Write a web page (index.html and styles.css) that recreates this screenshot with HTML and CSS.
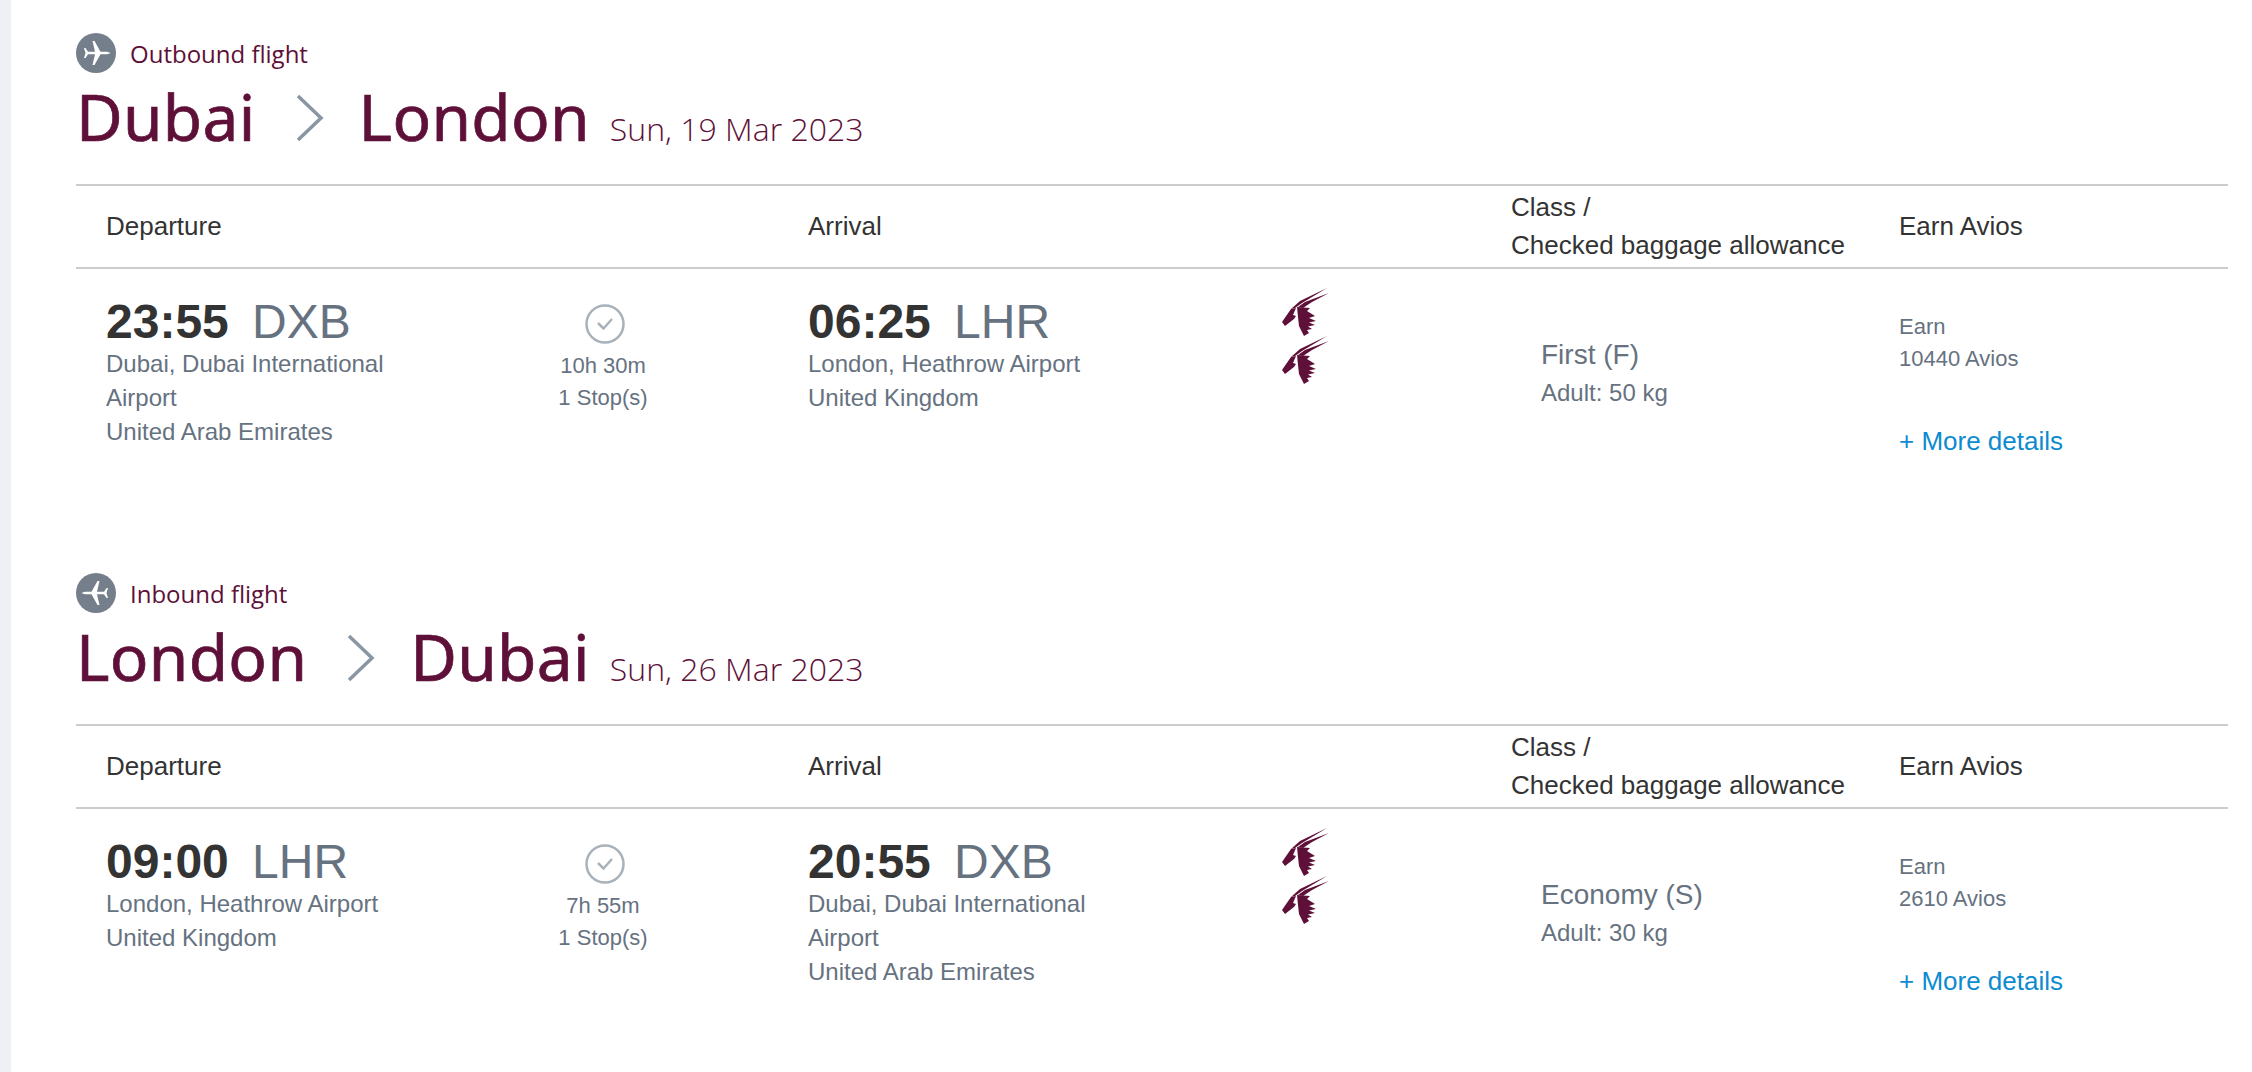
FILE: index.html
```html
<!DOCTYPE html>
<html lang="en">
<head>
    <meta charset="UTF-8">
    <title>Flight details</title>
    <link rel="stylesheet" href="styles.css">
</head>
<body>
    <svg class="defs" width="0" height="0">
        <symbol id="oryx" viewBox="0 0 48 48">
            <path d="M46 0 L19 13 L10 21 L14 20 L21 15 Z"/>
            <path d="M48 5 L24 14 L17 19 L22 20 L31 14 Z"/>
            <path d="M10 21 L1 34 L4 38 L13 31 L15 28 L12 27 L15 20 Z"/>
            <path d="M16 19 L29 20 L26 23 L34 28 L28 30 L35 33 L28 34.500 L34 37 L27 38.500 L31 41 L26 42 L28 45 L23 48 L18 38 L17 29 Z"/>
        </symbol>
        <symbol id="plane" viewBox="0 0 40 40">
            <path fill="#fff" d="M8 15 L9.500 15 L12 18.800 L19 18.800 L16.500 8 L18.500 8 L24.500 18.800 L31 18.800 Q34 19.500 34.500 20 Q34 20.500 31 21.200 L24.500 21.200 L18.500 32 L16.500 32 L19 21.200 L12 21.200 L9.500 25 L8 25 L9.500 20 Z"/>
        </symbol>
    </svg>

    <div class="page">
        <!-- Outbound -->
        <section class="bound">
            <div class="bound-label">
                <svg class="plane-badge"><use href="#plane"/></svg>
                Outbound flight
            </div>
            <h1 class="route">
                <span>Dubai</span>
                <svg class="route-arrow" viewBox="0 0 28 46"><path d="M2 1 L25 23 L2 45"/></svg>
                <span>London</span>
                <small>Sun, 19 Mar 2023</small>
            </h1>
            <div class="flight-head">
                <div class="col-seg">Departure</div>
                <div class="col-seg">Arrival</div>
                <div class="col-class">Class /<br>Checked baggage allowance</div>
                <div class="col-earn">Earn Avios</div>
            </div>
            <div class="flight-row">
                <div class="seg">
                    <div class="place">
                        <div class="time"><b>23:55</b> DXB</div>
                        <p>Dubai, Dubai International Airport</p>
                        <p>United Arab Emirates</p>
                    </div>
                    <div class="duration">
                        <svg class="clock" viewBox="0 0 40 40"><circle cx="20" cy="20" r="18.500"/><path d="M13 19 L18.500 24.500 L27 15"/></svg>
                        <div>10h 30m</div>
                        <div>1 Stop(s)</div>
                    </div>
                </div>
                <div class="seg">
                    <div class="place">
                        <div class="time"><b>06:25</b> LHR</div>
                        <p>London, Heathrow Airport</p>
                        <p>United Kingdom</p>
                    </div>
                    <div class="carrier">
                        <svg><use href="#oryx"/></svg>
                        <svg><use href="#oryx"/></svg>
                    </div>
                </div>
                <div class="cabin">
                    <div class="cabin-name">First (F)</div>
                    <div>Adult: 50 kg</div>
                </div>
                <div class="earn">
                    <div>Earn</div>
                    <div>10440 Avios</div>
                    <a href="#" class="more">+ More details</a>
                </div>
            </div>
        </section>

        <!-- Inbound -->
        <section class="bound">
            <div class="bound-label">
                <svg class="plane-badge flip"><use href="#plane"/></svg>
                Inbound flight
            </div>
            <h1 class="route">
                <span>London</span>
                <svg class="route-arrow" viewBox="0 0 28 46"><path d="M2 1 L25 23 L2 45"/></svg>
                <span>Dubai</span>
                <small>Sun, 26 Mar 2023</small>
            </h1>
            <div class="flight-head">
                <div class="col-seg">Departure</div>
                <div class="col-seg">Arrival</div>
                <div class="col-class">Class /<br>Checked baggage allowance</div>
                <div class="col-earn">Earn Avios</div>
            </div>
            <div class="flight-row">
                <div class="seg">
                    <div class="place">
                        <div class="time"><b>09:00</b> LHR</div>
                        <p>London, Heathrow Airport</p>
                        <p>United Kingdom</p>
                    </div>
                    <div class="duration">
                        <svg class="clock" viewBox="0 0 40 40"><circle cx="20" cy="20" r="18.500"/><path d="M13 19 L18.500 24.500 L27 15"/></svg>
                        <div>7h 55m</div>
                        <div>1 Stop(s)</div>
                    </div>
                </div>
                <div class="seg">
                    <div class="place">
                        <div class="time"><b>20:55</b> DXB</div>
                        <p>Dubai, Dubai International Airport</p>
                        <p>United Arab Emirates</p>
                    </div>
                    <div class="carrier">
                        <svg><use href="#oryx"/></svg>
                        <svg><use href="#oryx"/></svg>
                    </div>
                </div>
                <div class="cabin">
                    <div class="cabin-name">Economy (S)</div>
                    <div>Adult: 30 kg</div>
                </div>
                <div class="earn">
                    <div>Earn</div>
                    <div>2610 Avios</div>
                    <a href="#" class="more">+ More details</a>
                </div>
            </div>
        </section>
    </div>
</body>
</html>
```

FILE: styles.css
```css
html, body {
    height: 100%;
}
body {
    margin: 0;
    background: #fff;
    overflow: hidden;
    font-family: "Liberation Sans", Arial, sans-serif;
    color: #333;
}
.defs {
    display: block;
}
.page {
    box-sizing: border-box;
    height: 100%;
    border-left: 11px solid #eef0f6;
    padding: 33px 24px 0 65px;
}
.bound {
    height: 540px;
}
.bound-label {
    display: flex;
    align-items: center;
    gap: 14px;
    height: 40px;
    font-family: "Open Sans", sans-serif;
    font-size: 24px;
    color: #5e1038;
}
.plane-badge {
    width: 40px;
    height: 40px;
    border-radius: 50%;
    background: #747f8b;
}
.plane-badge.flip {
    transform: scaleX(-1);
}
.route {
    display: flex;
    align-items: baseline;
    margin: 0;
    height: 78px;
    padding-top: 5px;
    font-family: "Noto Sans", sans-serif;
    font-size: 64px;
    font-weight: 400;
    line-height: 78px;
    letter-spacing: 0.3px;
    color: #5e1038;
    -webkit-text-stroke: 0.7px #5e1038;
}
.route-arrow {
    width: 28px;
    height: 46px;
    margin: 0 35px 0 40px;
    fill: none;
    stroke: #8a96a2;
    stroke-width: 3.500;
}
.route small {
    margin-left: 20px;
    font-family: "Open Sans", sans-serif;
    font-size: 32px;
    font-weight: 300;
    letter-spacing: 0;
    -webkit-text-stroke: 0;
}
.flight-head,
.flight-row {
    display: grid;
    grid-template-columns: 702px 703px 388px 1fr;
}
.flight-head {
    height: 79px;
    margin-top: 28px;
    padding-bottom: 2px;
    align-items: center;
    border-top: 2px solid #ccc;
    border-bottom: 2px solid #ccc;
    font-size: 26px;
    line-height: 38px;
}
.col-seg,
.col-class,
.seg {
    padding-left: 30px;
}
.col-earn,
.earn {
    padding-left: 30px;
}
.seg {
    display: flex;
}
.place {
    width: 290px;
    font-size: 24px;
    line-height: 34px;
    color: #66727f;
}
.place p {
    margin: 0;
}
.time {
    height: 47px;
    padding-top: 26px;
    font-size: 48px;
    line-height: 54px;
    margin-bottom: 5px;
}
.time b {
    color: #333;
    margin-right: 10px;
}
.duration {
    width: 208px;
    margin-left: 103px;
    padding-top: 35px;
    text-align: center;
    font-size: 22px;
    line-height: 32px;
    color: #66727f;
}
.clock {
    display: block;
    width: 40px;
    height: 40px;
    margin: 0 0 6px 86px;
    fill: none;
    stroke: #a9b2ba;
    stroke-width: 2.500;
}
.carrier {
    margin-left: 183px;
    padding-top: 19px;
}
.carrier svg {
    display: block;
    width: 48px;
    height: 48px;
    fill: #5e1038;
}
.cabin {
    padding: 67px 0 0 60px;
    font-size: 24px;
    line-height: 38px;
    color: #66727f;
}
.cabin-name {
    font-size: 28px;
}
.earn {
    padding-top: 42px;
    font-size: 22px;
    line-height: 32px;
    color: #66727f;
}
.more {
    display: block;
    margin-top: 50px;
    font-size: 26px;
    color: #0c8bd0;
    text-decoration: none;
}
```
